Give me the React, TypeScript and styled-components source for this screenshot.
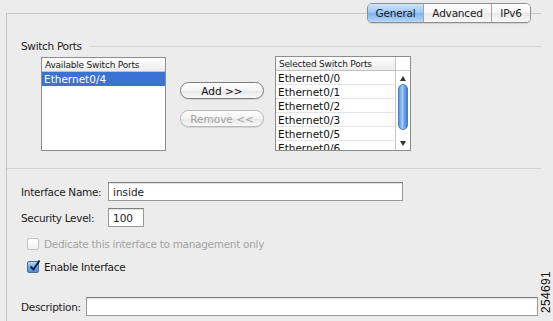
import styled, { createGlobalStyle } from "styled-components";

const GlobalStyle = createGlobalStyle`
  html, body {
    margin: 0;
    padding: 0;
    background: #ececec;
  }
  body {
    font-family: "DejaVu Sans", "Liberation Sans", sans-serif;
    font-size: 10.5px;
    color: #222;
  }
`;

const Screen = styled.div`
  position: relative;
  width: 553px;
  height: 321px;
  overflow: hidden;
  background: #ececec;
`;

const Panel = styled.div`
  margin: 13px 0 0 6px;
  width: 534px;
  height: 308px;
  border-top: 1px solid #c9c9c9;
  border-left: 1px solid #c4c4c4;
  display: flex;
  flex-direction: column;
`;

const TabRow = styled.div`
  display: flex;
  justify-content: flex-end;
  margin-top: -11px;
  padding-right: 10px;
  height: 20px;
`;

const TabGroup = styled.div`
  display: flex;
  border: 1px solid #8e8e8e;
  border-radius: 5px;
  overflow: hidden;
  box-shadow: 0 1px 1px rgba(0, 0, 0, 0.12);
`;

const Tab = styled.div<{ $active?: boolean; $w: number }>`
  display: flex;
  align-items: center;
  justify-content: center;
  width: ${(p) => p.$w}px;
  font-size: 10.5px;
  letter-spacing: -0.2px;
  color: #1a1a1a;
  background: ${(p) =>
    p.$active
      ? "linear-gradient(#cfe4fb, #9cc6f2 50%, #7db3ee 51%, #b6d8fb)"
      : "linear-gradient(#ffffff, #f6f6f6 50%, #e9e9e9 51%, #f7f7f7)"};
  & + & {
    border-left: 1px solid #a6a6a6;
  }
`;

const Section = styled.div`
  margin-top: 16px;
  padding-bottom: 17px;
  border-bottom: 1px solid #d2d2d2;
`;

const Legend = styled.div`
  display: flex;
  align-items: center;
  height: 14px;
  padding-left: 14px;
  gap: 8px;
  font-size: 10.5px;
  letter-spacing: -0.3px;
  &::after {
    content: "";
    flex: 1;
    border-top: 1px solid #d6d6d6;
  }
`;

const ListsRow = styled.div`
  display: flex;
  margin-top: 3px;
  padding-left: 34px;
`;

const ListBox = styled.div<{ $w: number; $h: number; $top: number }>`
  position: relative;
  width: ${(p) => p.$w}px;
  height: ${(p) => p.$h}px;
  margin-top: ${(p) => p.$top}px;
  border: 1px solid #8d8d8d;
  background: #fff;
  overflow: hidden;
  box-sizing: border-box;
`;

const ListHeader = styled.div`
  height: 13px;
  display: flex;
  align-items: center;
  padding-left: 3px;
  font-size: 9px;
  letter-spacing: -0.2px;
  background: linear-gradient(#ffffff, #ececec);
  border-bottom: 1px solid #c2c2c2;
`;

const ListItem = styled.div<{ $selected?: boolean }>`
  height: 13px;
  display: flex;
  align-items: center;
  padding-left: 2px;
  font-size: 10.5px;
  color: ${(p) => (p.$selected ? "#fff" : "#111")};
  background: ${(p) => (p.$selected ? "#3a73d1" : "#fff")};
  border-bottom: 1px solid ${(p) => (p.$selected ? "#3a73d1" : "#e6e6e6")};
`;

const ButtonColumn = styled.div`
  display: flex;
  flex-direction: column;
  gap: 11px;
  padding-top: 26px;
  margin: 0 11px 0 14px;
`;

const PillButton = styled.div<{ $disabled?: boolean }>`
  width: 84px;
  height: 17px;
  box-sizing: border-box;
  border-radius: 9px;
  border: 1px solid ${(p) => (p.$disabled ? "#b9b9b9" : "#7d7d7d")};
  background: linear-gradient(#ffffff, #f3f3f3 50%, #e6e6e6 51%, #fafafa);
  display: flex;
  align-items: center;
  justify-content: center;
  font-size: 10.5px;
  color: ${(p) => (p.$disabled ? "#a2a2a2" : "#111")};
  box-shadow: 0 1px 1px rgba(0, 0, 0, 0.1);
`;

const Rows = styled.div`
  margin-right: 14px;
`;

const ScrollBar = styled.div`
  position: absolute;
  top: 0;
  right: 0;
  bottom: 0;
  width: 14px;
  border-left: 1px solid #c8c8c8;
  background: #fff;
  display: flex;
  flex-direction: column;
  align-items: center;
`;

const ScrollCorner = styled.div`
  width: 100%;
  height: 13px;
  border-bottom: 1px solid #c8c8c8;
`;

const Arrow = styled.div<{ $down?: boolean }>`
  width: 0;
  height: 0;
  margin: 5px 0 3px;
  border-left: 3px solid transparent;
  border-right: 3px solid transparent;
  ${(p) =>
    p.$down
      ? "border-top: 5px solid #333; margin-top: auto; margin-bottom: 4px;"
      : "border-bottom: 5px solid #333;"}
`;

const Thumb = styled.div`
  width: 10px;
  height: 46px;
  border-radius: 5px;
  border: 1px solid #4a7fc6;
  box-sizing: border-box;
  background: linear-gradient(90deg, #5b96e2, #a9cdf7 45%, #78acec 60%, #3f80d9);
`;

const FormRow = styled.div<{ $top: number }>`
  display: flex;
  align-items: center;
  margin-top: ${(p) => p.$top}px;
  padding-left: 14px;
`;

const Label = styled.div<{ $w: number }>`
  width: ${(p) => p.$w}px;
  font-size: 10.5px;
  letter-spacing: -0.3px;
`;

const TextInput = styled.div<{ $w: number }>`
  width: ${(p) => p.$w}px;
  height: 19px;
  box-sizing: border-box;
  border: 1px solid #9a9a9a;
  border-top-color: #7e7e7e;
  background: #fff;
  box-shadow: inset 0 1px 1px rgba(0, 0, 0, 0.12);
  display: flex;
  align-items: center;
  padding-left: 4px;
  font-size: 10.5px;
`;

const CheckRow = styled.div<{ $top: number; $disabled?: boolean }>`
  display: flex;
  align-items: center;
  gap: 5px;
  height: 15px;
  margin-top: ${(p) => p.$top}px;
  padding-left: 20px;
  font-size: 10.5px;
  letter-spacing: -0.3px;
  color: ${(p) => (p.$disabled ? "#a4a4a4" : "#1a1a1a")};
`;

const Box = styled.div<{ $checked?: boolean }>`
  width: 12px;
  height: 12px;
  box-sizing: border-box;
  border-radius: 2px;
  border: 1px solid ${(p) => (p.$checked ? "#4d6f9c" : "#c2c2c2")};
  background: ${(p) =>
    p.$checked
      ? "linear-gradient(#b8d6f8, #6ea5e6 55%, #4f8edf)"
      : "linear-gradient(#ffffff, #f1f1f1)"};
  position: relative;
  svg {
    position: absolute;
    left: 0;
    top: -3px;
  }
`;

const FigureId = styled.div`
  position: absolute;
  right: -14px;
  bottom: 22px;
  transform: rotate(-90deg);
  transform-origin: center;
  font-family: "Liberation Sans", Arial, sans-serif;
  font-size: 12px;
  color: #111;
  letter-spacing: 0.3px;
`;

const selected = [
  "Ethernet0/0",
  "Ethernet0/1",
  "Ethernet0/2",
  "Ethernet0/3",
  "Ethernet0/5",
  "Ethernet0/6",
];

export default function App() {
  return (
    <>
      <GlobalStyle />
      <Screen>
        <Panel>
          <TabRow>
            <TabGroup>
              <Tab $active $w={55}>General</Tab>
              <Tab $w={67}>Advanced</Tab>
              <Tab $w={38}>IPv6</Tab>
            </TabGroup>
          </TabRow>

          <Section>
            <Legend>Switch Ports</Legend>
            <ListsRow>
              <ListBox $w={125} $h={94} $top={1}>
                <ListHeader>Available Switch Ports</ListHeader>
                <ListItem $selected>Ethernet0/4</ListItem>
              </ListBox>
              <ButtonColumn>
                <PillButton>Add &gt;&gt;</PillButton>
                <PillButton $disabled>Remove &lt;&lt;</PillButton>
              </ButtonColumn>
              <ListBox $w={136} $h={95} $top={0}>
                <Rows>
                  <ListHeader>Selected Switch Ports</ListHeader>
                  {selected.map((s) => (
                    <ListItem key={s}>{s}</ListItem>
                  ))}
                </Rows>
                <ScrollBar>
                  <ScrollCorner />
                  <Arrow />
                  <Thumb />
                  <Arrow $down />
                </ScrollBar>
              </ListBox>
            </ListsRow>
          </Section>

          <FormRow $top={13}>
            <Label $w={87}>Interface Name:</Label>
            <TextInput $w={295}>inside</TextInput>
          </FormRow>
          <FormRow $top={7}>
            <Label $w={87}>Security Level:</Label>
            <TextInput $w={36}>100</TextInput>
          </FormRow>
          <CheckRow $top={9} $disabled>
            <Box />
            Dedicate this interface to management only
          </CheckRow>
          <CheckRow $top={8}>
            <Box $checked>
              <svg width="13" height="13" viewBox="0 0 13 13">
                <path
                  d="M2.5 7.5 L5.5 10.5 L11.5 1.5"
                  fill="none"
                  stroke="#0e1f3a"
                  strokeWidth="2"
                />
              </svg>
            </Box>
            Enable Interface
          </CheckRow>
          <FormRow $top={23}>
            <Label $w={65}>Description:</Label>
            <TextInput $w={452} />
          </FormRow>
        </Panel>
        <FigureId>254691</FigureId>
      </Screen>
    </>
  );
}
